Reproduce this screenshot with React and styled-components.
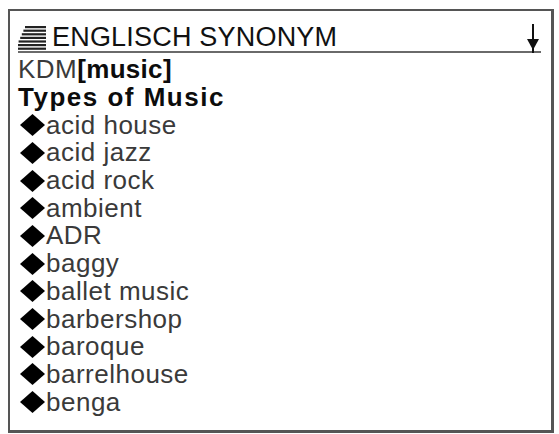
import styled, { createGlobalStyle } from "styled-components";

const GlobalStyle = createGlobalStyle`
  html, body {
    margin: 0;
    padding: 0;
    background: #fff;
  }
`;

const Screen = styled.div`
  box-sizing: border-box;
  width: 546px;
  height: 424px;
  margin: 9px 0 0 8px;
  padding: 13px 10px 0 8px;
  border: 2px solid #555;
  border-right-width: 3px;
  border-bottom-width: 3px;
  background: #fff;
  font-family: "Liberation Sans", Arial, sans-serif;
  color: #3a3a3a;
`;

const TitleBar = styled.div`
  display: flex;
  align-items: center;
  gap: 6px;
  height: 27px;
  border-bottom: 2px solid #6a6a6a;
`;

const Title = styled.span`
  flex: 1;
  font-size: 27px;
  line-height: 27px;
  color: #111;
  letter-spacing: 0.2px;
`;

const Lines = styled.div`
  display: flex;
  flex-direction: column;
  padding-top: 3px;
`;

const Line = styled.div`
  display: flex;
  align-items: center;
  height: 27.7px;
  font-size: 26px;
  font-weight: ${(p) => (p.$bold ? 700 : 400)};
  letter-spacing: ${(p) => (p.$bold ? "1.5px" : "0.5px")};
  color: ${(p) => (p.$bold ? "#0c0c0c" : "#3a3a3a")};
  white-space: pre;
`;

const Bold = styled.b`
  color: #0c0c0c;
  letter-spacing: 0.3px;
`;

const Bullet = styled.svg`
  width: 25px;
  height: 22px;
  margin: 0 1px 0 2px;
  flex: none;
`;

const StackIcon = () => (
  <svg width="28" height="26" viewBox="0 0 28 26">
    {[0, 1, 2, 3, 4, 5, 6].map((i) => (
      <rect key={i} x={Math.max(0, 7 - i * 1.6)} y={1 + i * 3.6} width={28 - Math.max(0, 7 - i * 1.6)} height="2.2" fill="#222" />
    ))}
  </svg>
);

const DownArrow = () => (
  <svg width="16" height="30" viewBox="0 0 16 30" style={{ marginBottom: -2 }}>
    <line x1="8" y1="0" x2="8" y2="29" stroke="#111" strokeWidth="2" />
    <path d="M2 15 L14 15 L8 26 Z" fill="#111" />
  </svg>
);

const Diamond = () => (
  <Bullet viewBox="0 0 25 22">
    <path d="M12.5 0 L25 11 L12.5 22 L0 11 Z" fill="#000" />
  </Bullet>
);

const entries = [
  "acid house",
  "acid jazz",
  "acid rock",
  "ambient",
  "ADR",
  "baggy",
  "ballet music",
  "barbershop",
  "baroque",
  "barrelhouse",
  "benga",
];

const App = () => {
  return (
    <>
      <GlobalStyle />
      <Screen>
        <TitleBar>
          <StackIcon />
          <Title>ENGLISCH SYNONYM</Title>
          <DownArrow />
        </TitleBar>
        <Lines>
          <Line>
            KDM<Bold>[music]</Bold>
          </Line>
          <Line $bold>Types of Music</Line>
          {entries.map((item) => (
            <Line key={item}>
              <Diamond />
              {item}
            </Line>
          ))}
        </Lines>
      </Screen>
    </>
  );
};

export default App;
